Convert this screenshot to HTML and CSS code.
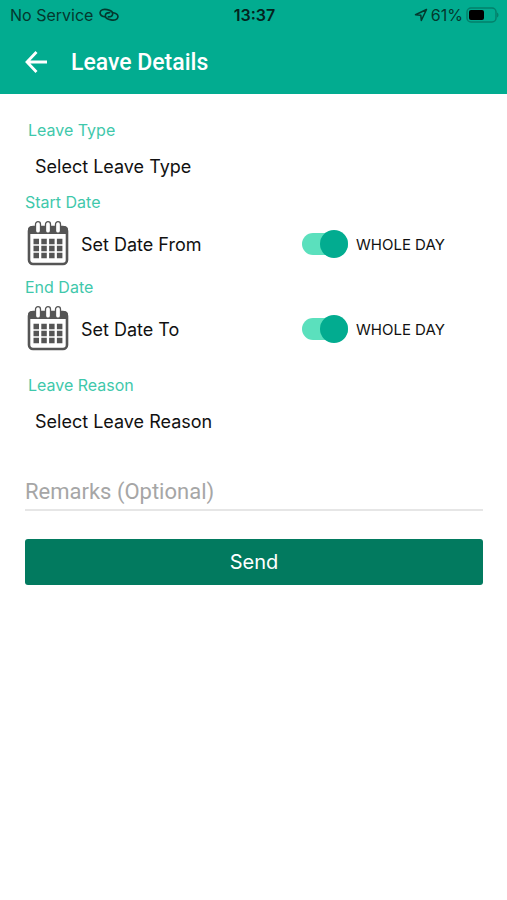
FILE: index.html
```html
<!DOCTYPE html>
<html lang="en">
<head>
<meta charset="utf-8">
<meta name="viewport" content="width=device-width, initial-scale=1">
<title>Leave Details</title>
<link rel="stylesheet" href="styles.css">
</head>
<body>
<svg class="defs" aria-hidden="true">
  <symbol id="calendar" viewBox="0 0 42 46">
    <rect x="2" y="6" width="38" height="37" rx="4" fill="#fff" stroke="#555" stroke-width="2.600"/>
    <path d="M1 13V9a4 4 0 0 1 4-4h32a4 4 0 0 1 4 4v4z" fill="#555"/>
    <g fill="#fff" stroke="#555" stroke-width="1.300">
      <rect x="8.500" y="0.700" width="5" height="11.500" rx="2.500"/>
      <rect x="18.500" y="0.700" width="5" height="11.500" rx="2.500"/>
      <rect x="28.500" y="0.700" width="5" height="11.500" rx="2.500"/>
    </g>
    <path d="M6.500 20.500h29.500M6.500 27.500h29.500M6.500 34.500h29.500" stroke="#555" stroke-width="5.500" stroke-dasharray="5.500 2.300"/>
  </symbol>
</svg>
<header class="header">
  <div class="status">
    <div class="status-left">
      <span>No Service</span>
      <svg class="link-icon" viewBox="0 0 20 14" fill="none" stroke="#04382e" stroke-width="1.600" stroke-linecap="round">
        <path d="M5.500 8.800C2.600 8.200.800 6.400 1.100 4.300 1.500 1.700 4.600 1 8 1.600c3.600.6 6 2.300 5.600 4.700-.3 1.700-2 2.600-4.300 2.600"/>
        <path d="M14.500 4.700c2.900.6 4.700 2.400 4.400 4.500-.4 2.600-3.500 3.300-6.900 2.700-3.600-.6-6-2.300-5.600-4.700.3-1.700 2-2.600 4.300-2.600"/>
      </svg>
    </div>
    <span class="clock">13:37</span>
    <div class="status-right">
      <svg class="location-icon" viewBox="0 0 14 14" fill="none" stroke="#04382e" stroke-width="1.500" stroke-linejoin="round"><path d="M12.500 1.500 1.500 6.700l5.300.5.500 5.300z"/></svg>
      <span>61%</span>
      <svg class="battery-icon" viewBox="0 0 33 16">
        <rect x="1" y="1" width="29" height="14" rx="4" fill="none" stroke="#04806b" stroke-width="1.500"/>
        <rect x="3" y="3" width="15" height="10" rx="2" fill="#000"/>
        <path d="M31 5.500c2 .8 2 4.200 0 5z" fill="#04806b"/>
      </svg>
    </div>
  </div>
  <div class="toolbar">
    <button class="back" type="button" aria-label="Back">
      <svg viewBox="0 0 22 22" fill="none" stroke="#fff" stroke-width="2.800"><path d="M22 11H2.500M11.500 1 2 11l9.500 10"/></svg>
    </button>
    <h1>Leave Details</h1>
  </div>
</header>
<main>
  <form class="form">
    <div class="field">
      <label class="caption" for="type">Leave Type</label>
      <select id="type"><option>Select Leave Type</option></select>
    </div>
    <div class="date-field">
      <span class="caption" id="start">Start Date</span>
      <div class="row">
        <button class="date" type="button" aria-describedby="start"><svg><use href="#calendar"/></svg>Set Date From</button>
        <label class="toggle"><input type="checkbox" role="switch" checked>WHOLE DAY</label>
      </div>
    </div>
    <div class="date-field">
      <span class="caption" id="end">End Date</span>
      <div class="row">
        <button class="date" type="button" aria-describedby="end"><svg><use href="#calendar"/></svg>Set Date To</button>
        <label class="toggle"><input type="checkbox" role="switch" checked>WHOLE DAY</label>
      </div>
    </div>
    <div class="field reason">
      <label class="caption" for="reason">Leave Reason</label>
      <select id="reason"><option>Select Leave Reason</option></select>
    </div>
    <input class="remarks" type="text" placeholder="Remarks (Optional)" aria-label="Remarks (Optional)">
    <button class="send" type="button">Send</button>
  </form>
</main>
</body>
</html>
```
FILE: styles.css
```css
* {
  box-sizing: border-box;
}

body {
  margin: 0;
  background: #fff;
  color: #111;
  font-family: Inter, "Liberation Sans", sans-serif;
}

button,
select,
input {
  margin: 0;
  padding: 0;
  border: 0;
  background: none;
  color: inherit;
  font: inherit;
}

.defs {
  position: absolute;
  width: 0;
  height: 0;
}

.header {
  background: #02ac90;
}

.status {
  display: grid;
  grid-template-columns: 1fr auto 1fr;
  align-items: center;
  height: 30px;
  padding: 0 8px 0 10px;
  color: #04382e;
  font-size: 16px;
}

.status-left,
.status-right {
  display: flex;
  align-items: center;
  gap: 6px;
}

.status-right {
  justify-content: flex-end;
  gap: 3px;
}

.clock {
  color: #04241e;
  font-weight: 600;
}

.link-icon {
  width: 20px;
  height: 14px;
}

.location-icon {
  width: 14px;
  height: 14px;
}

.battery-icon {
  width: 33px;
  height: 16px;
}

.toolbar {
  display: flex;
  align-items: center;
  gap: 24px;
  height: 64px;
  padding: 0 25px;
}

.back,
.back svg {
  display: block;
  width: 22px;
  height: 22px;
}

h1 {
  margin: 0;
  padding-top: 2px;
  color: #fff;
  font: 500 23px/28px Roboto, sans-serif;
}

.form {
  display: flex;
  flex-direction: column;
  gap: 10px;
  padding: 26px 24px 26px 25px;
}

.field,
.date-field {
  display: flex;
  flex-direction: column;
  gap: 10px;
}

.field .caption {
  padding-left: 3px;
}

.caption {
  color: #3fc8ab;
  font-size: 16px;
  line-height: 20px;
}

select {
  appearance: none;
  height: 32px;
  padding-left: 10px;
  font-size: 18px;
}

.row {
  display: grid;
  grid-template-columns: 277fr 181fr;
  align-items: center;
  height: 46px;
}

.date-field {
  gap: 9px;
}

.date {
  display: flex;
  align-items: center;
  gap: 12px;
  padding-left: 2px;
  font-size: 18px;
}

.date svg {
  width: 42px;
  height: 46px;
}

.toggle {
  display: flex;
  align-items: center;
  gap: 8px;
  font-size: 15px;
}

.toggle input {
  display: flex;
  align-items: center;
  appearance: none;
  width: 46px;
  height: 22px;
  background: #5be0bd;
  border-radius: 11px;
}

.toggle input::before {
  content: "";
  flex: none;
  width: 28px;
  height: 28px;
  border-radius: 50%;
  background: #02ac90;
}

.toggle input:checked::before {
  margin-left: auto;
}

.reason {
  margin-top: 13px;
}

.remarks {
  height: 38px;
  margin-top: 26px;
  border-bottom: 2px solid #e6e6e6;
  font: 22px Roboto, sans-serif;
}

.remarks::placeholder {
  color: #a6a6a6;
}

.send {
  height: 46px;
  margin-top: 18px;
  border-radius: 3px;
  background: #027a5f;
  color: #fff;
  font-size: 20px;
}
```
